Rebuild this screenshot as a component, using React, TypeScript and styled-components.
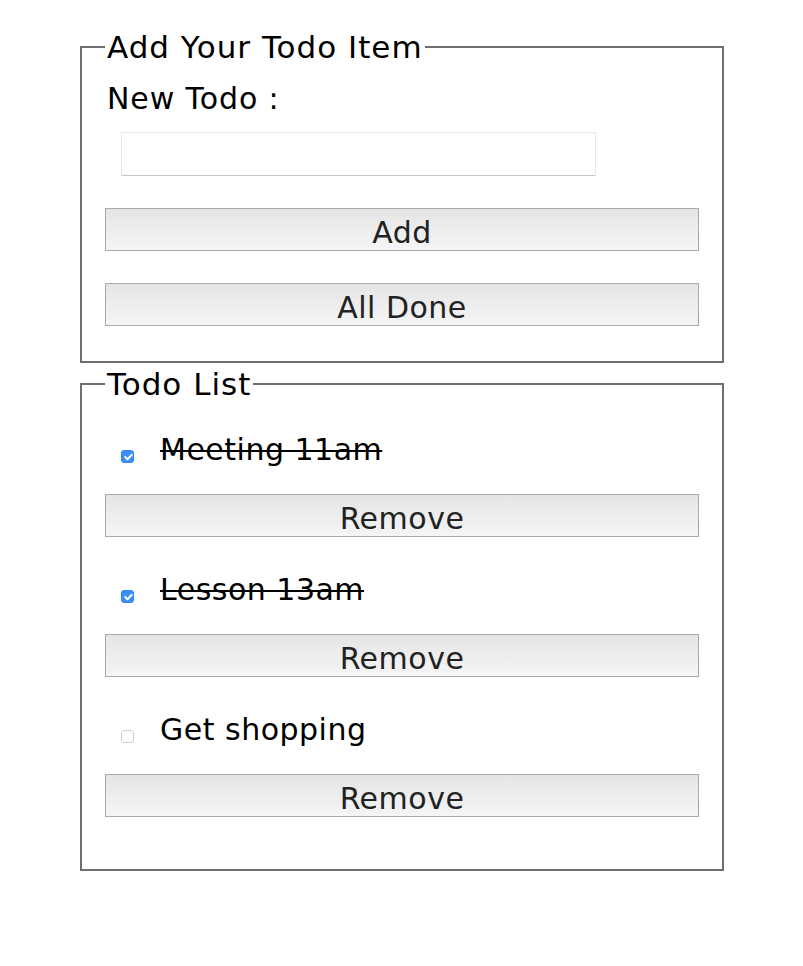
import React, { useState } from "react";
import styled, { createGlobalStyle } from "styled-components";

type Todo = {
  id: number;
  text: string;
  done: boolean;
};

const initialTodos: Todo[] = [
  { id: 1, text: "Meeting 11am", done: true },
  { id: 2, text: "Lesson 13am", done: true },
  { id: 3, text: "Get shopping", done: false },
];

const App: React.FC = () => {
  const [todos, setTodos] = useState<Todo[]>(initialTodos);
  const [draft, setDraft] = useState<string>("");

  const handleAdd = () => {
    if (!draft.trim()) return;
    setTodos([...todos, { id: Date.now(), text: draft.trim(), done: false }]);
    setDraft("");
  };

  const handleAllDone = () => {
    setTodos(todos.map((todo) => ({ ...todo, done: true })));
  };

  const handleToggle = (id: number) => {
    setTodos(
      todos.map((todo) => (todo.id === id ? { ...todo, done: !todo.done } : todo))
    );
  };

  const handleRemove = (id: number) => {
    setTodos(todos.filter((todo) => todo.id !== id));
  };

  return (
    <Page>
      <GlobalStyle />
      <Fieldset $bottom={35}>
        <Legend>Add Your Todo Item</Legend>
        <Label htmlFor="new-todo">New Todo :</Label>
        <Input
          id="new-todo"
          type="text"
          value={draft}
          onChange={(e) => setDraft(e.target.value)}
        />
        <Button $top={32} onClick={handleAdd}>
          Add
        </Button>
        <Button $top={32} onClick={handleAllDone}>
          All Done
        </Button>
      </Fieldset>

      <Fieldset $bottom={52}>
        <Legend>Todo List</Legend>
        <List>
          {todos.map((todo) => (
            <Item key={todo.id}>
              <Row>
                <Checkbox
                  type="checkbox"
                  checked={todo.done}
                  onChange={() => handleToggle(todo.id)}
                />
                <ItemText $done={todo.done}>{todo.text}</ItemText>
              </Row>
              <Button $top={27} onClick={() => handleRemove(todo.id)}>
                Remove
              </Button>
            </Item>
          ))}
        </List>
      </Fieldset>
    </Page>
  );
};

export default App;

const GlobalStyle = createGlobalStyle`
  html, body {
    margin: 0;
    padding: 0;
    background: #fff;
  }
  body {
    font-family: "DejaVu Sans", Verdana, sans-serif;
    color: #000;
  }
`;

const Page = styled.div`
  width: 644px;
  padding: 30px 0 0 80px;
  display: flex;
  flex-direction: column;
  gap: 4px;
`;

const Fieldset = styled.fieldset<{ $bottom: number }>`
  margin: 0;
  padding: 0 23px ${(p) => p.$bottom}px;
  border: 2px solid #6f6f6f;
  min-width: 0;
  display: flex;
  flex-direction: column;
  align-items: flex-start;
`;

const Legend = styled.legend`
  padding: 0 2px;
  font-size: 31px;
  line-height: 34px;
  letter-spacing: 1px;
`;

const Label = styled.label`
  margin-top: 18px;
  padding-left: 2px;
  font-size: 30px;
  line-height: 34px;
  letter-spacing: 0.9px;
`;

const Input = styled.input`
  box-sizing: border-box;
  width: 475px;
  height: 44px;
  margin: 16px 0 0 16px;
  padding: 0 8px;
  border: 1px solid #e8e8e8;
  border-bottom-color: #c9c9c9;
  font-family: inherit;
  font-size: 24px;
  outline: none;
`;

const Button = styled.button<{ $top: number }>`
  box-sizing: border-box;
  display: block;
  width: 100%;
  height: 43px;
  margin: ${(p) => p.$top}px 0 0;
  padding: 6px 0 0;
  border: 1px solid #aaa;
  background: linear-gradient(#e5e5e5, #f5f5f5);
  font-family: inherit;
  font-size: 30px;
  line-height: 34px;
  letter-spacing: 0.5px;
  color: #222;
  cursor: pointer;
`;

const List = styled.div`
  width: 100%;
  display: flex;
  flex-direction: column;
  gap: 36px;
  padding-top: 32px;
`;

const Item = styled.div`
  display: flex;
  flex-direction: column;
`;

const Row = styled.div`
  display: flex;
  align-items: center;
  height: 34px;
`;

const Checkbox = styled.input`
  appearance: none;
  position: relative;
  box-sizing: border-box;
  width: 13px;
  height: 13px;
  margin: 12px 26px 0 16px;
  border: 1px solid #cfcfcf;
  border-radius: 3px;
  background: #fff;
  cursor: pointer;

  &:checked {
    border-color: #2f86f6;
    background: #3b8ff7;
  }

  &:checked::after {
    content: "";
    position: absolute;
    left: 3.5px;
    top: 1px;
    width: 3px;
    height: 6px;
    border: solid #fff;
    border-width: 0 2px 2px 0;
    transform: rotate(45deg);
  }
`;

const ItemText = styled.span<{ $done: boolean }>`
  font-size: 30px;
  line-height: 34px;
  letter-spacing: 0.5px;
  text-decoration: ${(p) => (p.$done ? "line-through" : "none")};
  text-decoration-thickness: 2px;
`;
